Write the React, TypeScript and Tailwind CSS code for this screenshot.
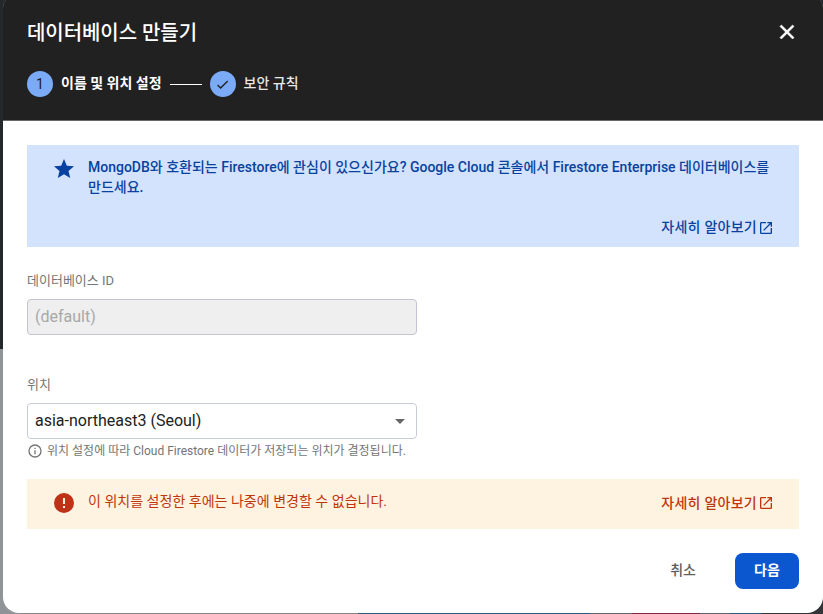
import React from 'react';

const Launch = () => (
  <svg viewBox="0 0 24 24" className="h-4 w-4 shrink-0 fill-current">
    <path d="M19 19H5V5h7V3H5a2 2 0 0 0-2 2v14a2 2 0 0 0 2 2h14c1.1 0 2-.9 2-2v-7h-2v7zM14 3v2h3.59l-9.83 9.83 1.41 1.41L19 6.41V10h2V3h-7z" />
  </svg>
);

function Header() {
  return (
    <header className="h-[121px] border-b border-[#686868] bg-[#212121] px-6 text-white">
      <div className="flex h-[66px] items-center justify-between">
        <h1 className="text-[20px] font-medium leading-7 tracking-[-.06px]">데이터베이스 만들기</h1>
        <svg viewBox="0 0 24 24" className="mb-0.5 h-6 w-6 fill-white stroke-white stroke-[0.6]">
          <path d="M19 6.41 17.59 5 12 10.59 6.41 5 5 6.41 10.59 12 5 17.59 6.41 19 12 13.41 17.59 19 19 17.59 13.41 12z" />
        </svg>
      </div>
      <div className="flex items-center pt-[5px] text-[14px] leading-5">
        <span className="flex h-[26px] w-[26px] items-center justify-center rounded-full bg-[#7baaf7] text-[#212121]">1</span>
        <span className="ml-2 -mt-0.5 font-bold">이름 및 위치 설정</span>
        <span className="ml-2 h-px w-8 bg-white" />
        <span className="ml-2 flex h-[26px] w-[26px] items-center justify-center rounded-full bg-[#7baaf7]">
          <svg viewBox="0 0 24 24" className="h-[15px] w-[15px] fill-[#212121]">
            <path d="M9 16.17 4.83 12l-1.42 1.41L9 19 21 7l-1.41-1.41z" />
          </svg>
        </span>
        <span className="ml-2 -mt-0.5 font-medium text-[#e8e8e8]">보안 규칙</span>
      </div>
    </header>
  );
}

export default function App() {
  return (
    <div className="h-[614px] w-[823px] overflow-hidden bg-[linear-gradient(#24282c_349px,#909397_349px)] font-[Roboto,'Noto_Sans_CJK_KR',sans-serif]">
      <div className="flex h-[614px] flex-col bg-[linear-gradient(90deg,#858585_338px,#285980_338px_570px,#5d626d_570px_612px,#7b2944_612px_680px,#606570_680px_710px,#285980_710px_742px,#333539_742px)] bg-[length:820px_20px] bg-[position:left_20px_bottom] bg-no-repeat">
        <div className="ml-[3px] -mt-[7px] h-[620px] w-[820px] overflow-hidden rounded-2xl bg-white pt-[7px] shadow-[inset_0_20px_0_#212121]">
          <Header />
          <main className="px-6 pt-6">
            <section className="h-[102px] bg-[#d3e3fd] pl-[25px] pr-[25px] pt-3 text-[14px] font-medium leading-5 text-[#0842a0]">
              <div className="flex">
                <svg viewBox="0 0 24 24" className="h-6 w-6 shrink-0 fill-current">
                  <path d="M12 17.27 18.18 21l-1.64-7.03L22 9.24l-7.19-.61L12 2 9.19 8.63 2 9.24l5.46 4.73L5.82 21z" />
                </svg>
                <p className="ml-3 whitespace-nowrap">MongoDB와 호환되는 Firestore에 관심이 있으신가요? Google Cloud 콘솔에서 Firestore Enterprise 데이터베이스를<br />만드세요.</p>
              </div>
              <a className="mt-[21px] flex items-center justify-end"><span className="mr-px -mt-px tracking-[.25px]">자세히 알아보기</span><Launch /></a>
            </section>
            <div className="mt-6 text-[13px] leading-5 text-[#757575]">데이터베이스 ID</div>
            <div className="mt-2 flex h-9 w-[390px] items-center rounded border border-[#c2c4d3] bg-[#efefef] px-[7px] text-[16px] text-[#a8a8a8]">(default)</div>
            <div className="mt-10 text-[13px] leading-5 text-[#757575]">위치</div>
            <div className="mt-2 flex h-9 w-[390px] items-center justify-between rounded border border-[#c8ccd8] bg-white pl-[7px] pr-[11px] text-[16px] text-[#212121]">
              asia-northeast3 (Seoul)
              <span className="border-x-[5px] border-t-[5px] border-x-transparent border-t-[#666]" />
            </div>
            <div className="mt-1 flex h-4 items-center text-[12px] leading-4 text-[#757575]">
              <svg viewBox="0 0 24 24" className="h-4 w-4 fill-current">
                <path d="M11 7h2v2h-2zm0 4h2v6h-2zm1-9a10 10 0 1 0 0 20 10 10 0 0 0 0-20zm0 18a8 8 0 1 1 0-16 8 8 0 0 1 0 16z" />
              </svg>
              <span className="ml-1 whitespace-nowrap">위치 설정에 따라 Cloud Firestore 데이터가 저장되는 위치가 결정됩니다.</span>
            </div>
            <section className="mt-5 flex h-[50px] items-center bg-[#fef2e0] px-[25px] pb-0.5 text-[14px] leading-5 text-[#bf360c]">
              <svg viewBox="0 0 24 24" className="h-6 w-6 fill-[#bf3217]">
                <path d="M12 2a10 10 0 1 0 0 20 10 10 0 0 0 0-20zm1 15h-2v-2h2zm0-4h-2V7h2z" />
              </svg>
              <span className="-mt-1 ml-3 tracking-[.02px]">이 위치를 설정한 후에는 나중에 변경할 수 없습니다.</span>
              <a className="ml-auto flex items-center font-medium"><span className="mr-px -mt-px tracking-[.25px]">자세히 알아보기</span><Launch /></a>
            </section>
            <div className="mt-6 flex justify-end text-[14px] font-medium leading-5">
              <button className="mr-[39px] h-9 pb-[3px] text-[#5f5f5f]">취소</button>
              <button className="h-9 w-16 rounded-lg bg-[#0b57d0] pb-[3px] font-bold text-white">다음</button>
            </div>
          </main>
        </div>
      </div>
    </div>
  );
}
